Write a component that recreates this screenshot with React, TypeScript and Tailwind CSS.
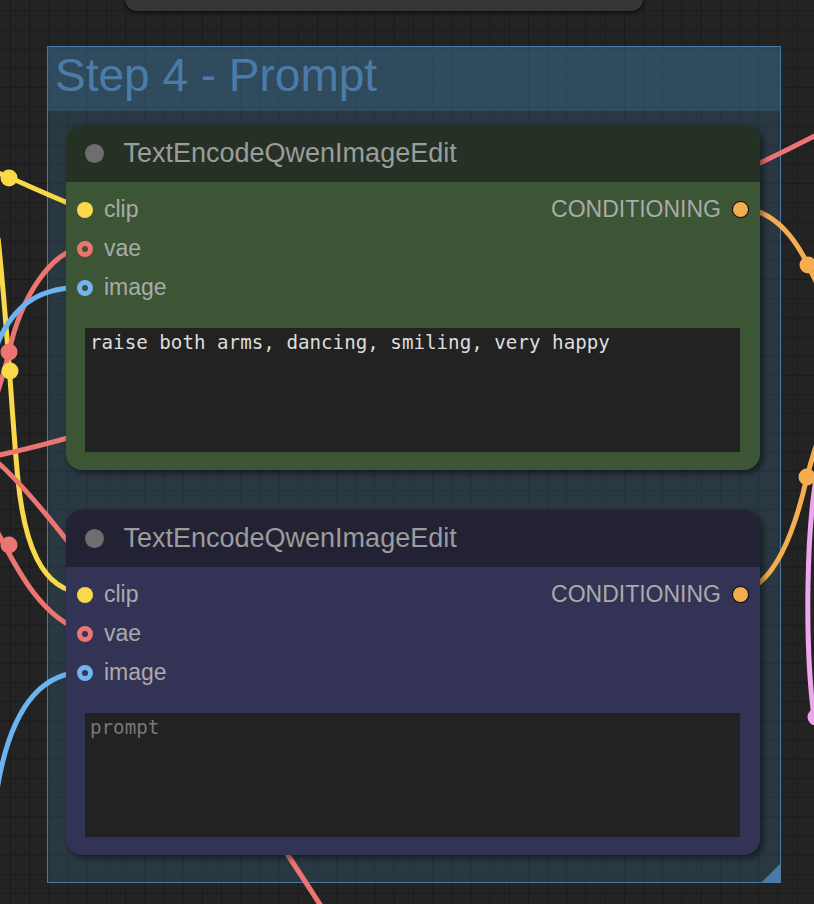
import React from "react";

const YEL = "#f9d84a";
const RED = "#ec7471";
const BLU = "#6cb3f2";
const ORA = "#f4ad4f";
const PNK = "#efa6ef";

function Wires() {
  const paths: [string, string][] = [
    ["M -30 162 C 0 172, 40 192, 85 210", YEL],
    ["M -2 238 C 8 330, 12 420, 18 480 C 24 540, 40 592, 85 593", YEL],
    ["M 85 247 C 50 250, 20 300, 9 352 C 5 370, 0 385, -5 400", RED],
    ["M 85 287 C 45 287, 15 300, -3 345", BLU],
    ["M -10 457 C 200 415, 650 222, 830 128", RED],
    ["M -20 450 C 20 468, 150 640, 330 920", RED],
    ["M -15 510 C 5 540, 30 615, 85 632", RED],
    ["M 85 672 C 40 672, 10 710, -3 790", BLU],
    ["M 741 208 C 775 210, 795 238, 808 265 C 815 280, 820 290, 825 300", ORA],
    ["M 741 592 C 775 585, 795 530, 807 477 C 810 465, 813 455, 818 440", ORA],
    ["M 820 460 C 805 520, 805 650, 814 717", PNK],
  ];
  const dots: [number, number, string][] = [
    [9, 178, YEL],
    [10, 371, YEL],
    [9, 352, RED],
    [9, 545, RED],
    [808, 265, ORA],
    [807, 477, ORA],
    [816, 717, PNK],
  ];
  return (
    <svg
      className="pointer-events-none absolute inset-0 z-10"
      width={814}
      height={904}
      viewBox="0 0 814 904"
    >
      {paths.map(([d, c], i) => (
        <path key={i} d={d} fill="none" stroke={c} strokeWidth={5} />
      ))}
      {dots.map(([x, y, c], i) => (
        <circle key={i} cx={x} cy={y} r={8.5} fill={c} />
      ))}
    </svg>
  );
}

function InputSlot({ label, dot }: { label: string; dot: string }) {
  return (
    <div className="flex h-[39px] items-center">
      <span className={dot} />
      <span className="ml-[11px] text-[23px] leading-none text-[#aaaaaa]">{label}</span>
    </div>
  );
}

function Node({
  nodeBg,
  titleBg,
  text,
  placeholder,
}: {
  nodeBg: string;
  titleBg: string;
  text?: string;
  placeholder?: string;
}) {
  return (
    <div
      className={`relative z-20 ml-[18px] w-[694px] overflow-hidden rounded-[16px] shadow-[3px_3px_6px_rgba(0,0,0,0.5)] ${nodeBg}`}
    >
      <div className={`flex h-[57px] items-center pl-[19px] ${titleBg}`}>
        <span className="h-[19px] w-[19px] rounded-full bg-[#6e6e6e]" />
        <span className="ml-[19.5px] text-[27px] leading-none text-[#9c9c9c]">
          TextEncodeQwenImageEdit
        </span>
      </div>
      <div className="px-[11px] pb-[18px] pt-[8px]">
        <div className="flex items-center justify-between">
          <InputSlot label="clip" dot="box-border h-4 w-4 rounded-full bg-[#f9d84a]" />
          <div className="flex items-center">
            <span className="text-[23px] leading-none text-[#aaaaaa]">CONDITIONING</span>
            <span className="ml-[11px] box-border h-[17px] w-[17px] rounded-full border-[1.5px] border-black bg-[#f2ad4c]" />
          </div>
        </div>
        <InputSlot label="vae" dot="box-border h-4 w-4 rounded-full border-[5px] border-[#ec7471]" />
        <InputSlot label="image" dot="box-border h-4 w-4 rounded-full border-[5px] border-[#71b4f2]" />
        <div className="ml-[8px] mt-[21px] h-[124px] w-[655px] bg-[#222222] px-[5px] pt-[3px] font-['DejaVu_Sans_Mono',monospace] text-[19.2px] leading-[1.2]">
          {text ? (
            <span className="text-[#dddddd]">{text}</span>
          ) : (
            <span className="text-[#777777]">{placeholder}</span>
          )}
        </div>
      </div>
    </div>
  );
}

export default function App() {
  return (
    <div className="relative h-[904px] w-[814px] overflow-hidden bg-[#232323] bg-[linear-gradient(to_right,#1b1b1b_1px,transparent_1px),linear-gradient(to_bottom,#1b1b1b_1px,transparent_1px)] [background-position:10px_10.4px] [background-size:19.2px_19.2px] font-['Liberation_Sans',Arial,sans-serif]">
      <div className="absolute left-[125px] top-[-30px] h-[41px] w-[518px] rounded-[12px] bg-[#353535] shadow-[0_2px_4px_rgba(0,0,0,0.6)]" />

      <div className="absolute left-[47px] top-[46px] h-[837px] w-[734px] border border-[#4a7ba6] bg-[#3f789e]/25">
        <div className="h-[64px] bg-[#3f789e]/30 pl-[7px] pt-[5px] text-[46px] leading-none text-[#4b7ca8]">
          Step 4 - Prompt
        </div>
        <div className="flex flex-col gap-[40px] pt-[14px]">
          <Node
            nodeBg="bg-[#3c5535]"
            titleBg="bg-[#263126]"
            text="raise both arms, dancing, smiling, very happy"
          />
          <Node nodeBg="bg-[#333355]" titleBg="bg-[#232234]" placeholder="prompt" />
        </div>
        <div className="absolute bottom-0 right-0 h-[18px] w-[18px] bg-[#4a7ba6] [clip-path:polygon(100%_0,100%_100%,0_100%)]" />
      </div>

      <Wires />
    </div>
  );
}
